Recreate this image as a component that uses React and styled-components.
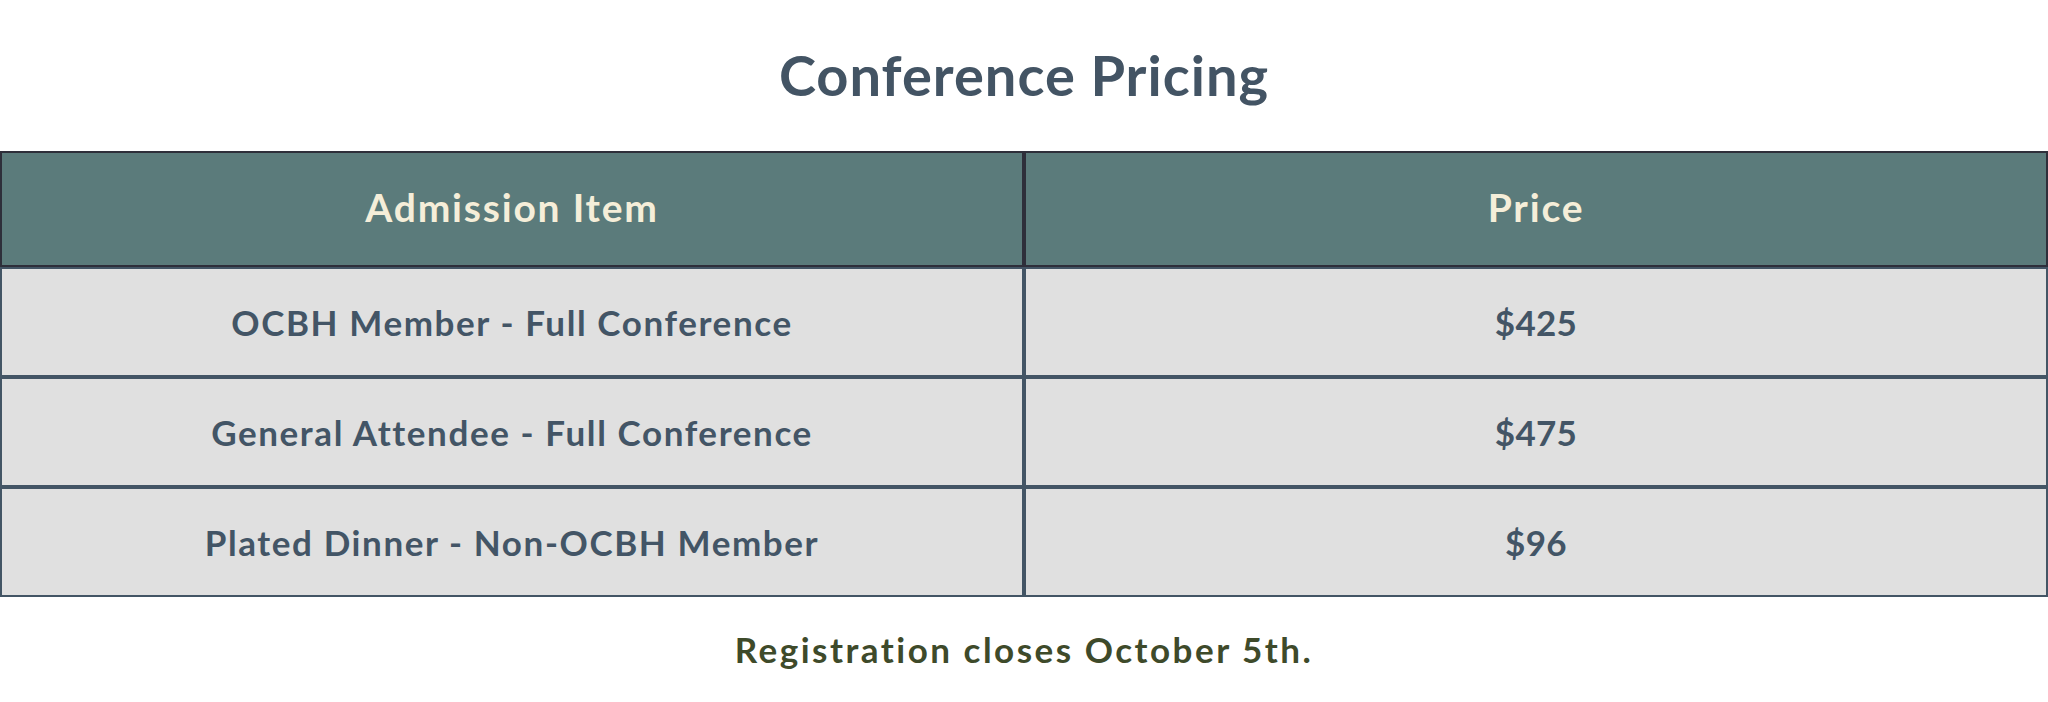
import React from 'react';
import styled, { createGlobalStyle } from 'styled-components';

const GlobalStyle = createGlobalStyle`
  html, body {
    margin: 0;
    padding: 0;
    background: #ffffff;
  }
  body {
    font-family: Lato, "Open Sans", sans-serif;
  }
`

const PricingView = styled.section`
  width: 100%;
  display: flex;
  flex-direction: column;
  align-items: stretch;
`

const Title = styled.h2`
  margin: 0;
  padding: 41px 0 43px;
  font-size: 56px;
  line-height: 67px;
  font-weight: 700;
  letter-spacing: 1px;
  color: #435464;
  text-align: center;
`

const PriceTable = styled.table`
  width: 100%;
  table-layout: fixed;
  border-collapse: separate;
  border-spacing: 0;
`

const HeadCell = styled.th`
  width: 50%;
  padding: 31px 0 35px;
  background: #5b7b7b;
  border: 2px solid #2e2f3a;
  color: #f5eed9;
  font-size: 39px;
  line-height: 46px;
  font-weight: 700;
  letter-spacing: 1.8px;
  text-align: center;
`

const Cell = styled.td`
  padding: 32px 0;
  background: #e0e0e0;
  border: 2px solid #435565;
  color: #435566;
  font-size: 35px;
  line-height: 42px;
  font-weight: 700;
  letter-spacing: ${p => (p.$price ? '0.3px' : '1.6px')};
  text-align: center;
`

const Note = styled.p`
  margin: 31px 0 0;
  font-size: 35px;
  line-height: 42px;
  font-weight: 700;
  letter-spacing: 2.5px;
  color: #3e4a2a;
  text-align: center;
`

const prices = [
  { item: 'OCBH Member - Full Conference', price: '$425' },
  { item: 'General Attendee - Full Conference', price: '$475' },
  { item: 'Plated Dinner - Non-OCBH Member', price: '$96' },
]

export default function App() {
  return (
    <PricingView>
      <GlobalStyle />
      <Title>Conference Pricing</Title>
      <PriceTable>
        <thead>
          <tr>
            <HeadCell>Admission Item</HeadCell>
            <HeadCell>Price</HeadCell>
          </tr>
        </thead>
        <tbody>
          {prices.map(row => (
            <tr key={row.item}>
              <Cell>{row.item}</Cell>
              <Cell $price>{row.price}</Cell>
            </tr>
          ))}
        </tbody>
      </PriceTable>
      <Note>Registration closes October 5th.</Note>
    </PricingView>
  )
}
